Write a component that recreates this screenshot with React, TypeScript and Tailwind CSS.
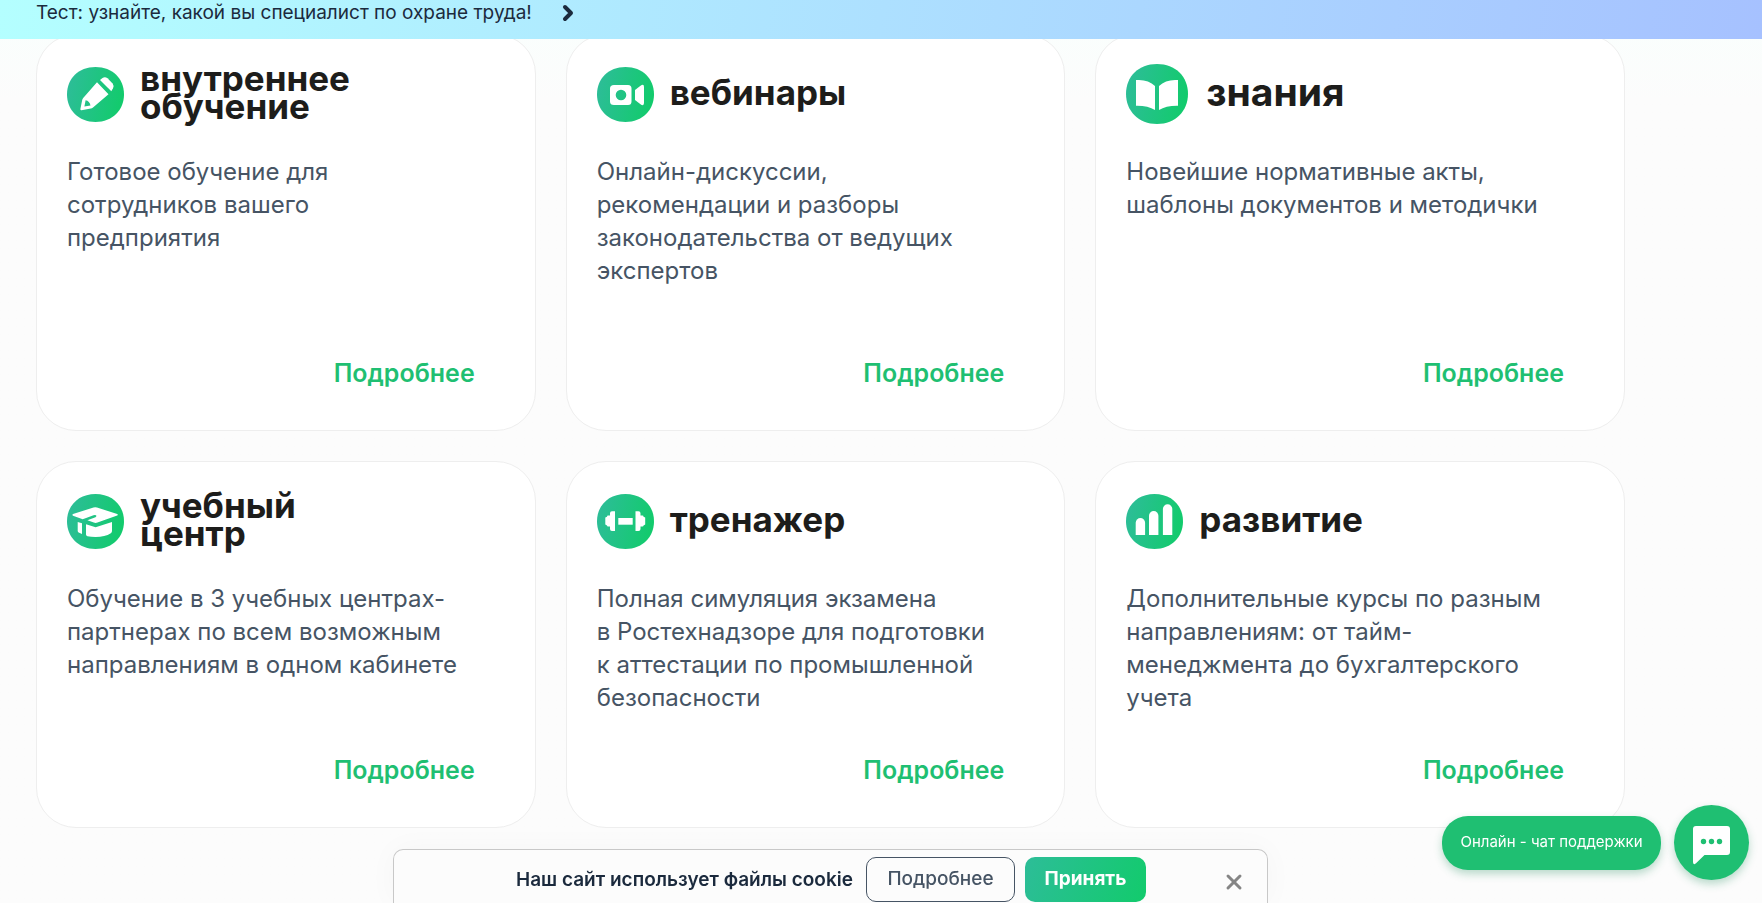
import React from 'react';
import { ChevronRight, X } from 'lucide-react';

type Badge = {
  id: string;
  width: number;
  height: number;
  art: React.ReactNode;
};

const badges: Record<string, Badge> = {
  pencil: {
    id: 'pencil',
    width: 57,
    height: 55,
    art: (
      <>
        <path
          fillRule="evenodd"
          d="M30 15.3 41.5 27.3 26 40.6Q25 41.4 23.8 41.6L14.5 43.2Q13.2 43.3 13.4 42L15.2 33Q15.4 31.8 16.2 30.9ZM18.6 33.3 17.4 39.4 23.5 38.4Q22.6 34 18.6 33.3Z"
        />
        <path d="M33 13 35.5 11Q38 9.3 40.5 11.3L45.6 16.5Q47.3 18.7 46 21.2L44.3 24.2Z" />
      </>
    ),
  },
  camera: {
    id: 'camera',
    width: 57,
    height: 55,
    art: (
      <>
        <path
          fillRule="evenodd"
          d="M17 18H31Q34.5 18 34.5 21.5V34.5Q34.5 38 31 38H17Q13 38 13 34.5V21.5Q13 18 17 18ZM24 22.7A5.3 5.3 0 1 0 24 33.3A5.3 5.3 0 1 0 24 22.7Z"
        />
        <path d="M38 23 43.5 18.7Q47 16.5 47 20V36Q47 39.5 43.5 37.3L38 33Z" />
      </>
    ),
  },
  book: {
    id: 'book',
    width: 62,
    height: 60,
    art: (
      <>
        <path d="M10 16Q22 15 29 22V46Q22 41.5 10 41.7Z" />
        <path d="M52 16Q40 15 33 22V46Q40 41.5 52 41.7Z" />
      </>
    ),
  },
  cap: {
    id: 'cap',
    width: 57,
    height: 55,
    art: (
      <>
        <path d="M6 20 26.5 13.5Q28.2 13 30 13.5L50.2 20Q51.3 20.7 50.2 21.5L30.5 28.6Q28.6 29.2 26.8 28.6L20.4 26.3 28.5 23.3Q30 22.3 29 21.3Q28 20.6 26.5 21.2L15.7 25.3 6 21.7Q4.8 20.8 6 20Z" />
        <path d="M10.7 28 15 29.3V40L11.6 38.4Q10.7 38 10.7 37Z" />
        <path d="M19 30.3 28.6 33.3 45 28V37Q45 38.5 43.8 39.2Q38 43 28.6 43Q24 43 20.4 42.2Q19 41.8 19 40.5Z" />
      </>
    ),
  },
  dumbbell: {
    id: 'dumbbell',
    width: 57,
    height: 55,
    art: (
      <>
        <path d="M15 17.3H18V37H15Q13 37 13 35V32.5H11Q10 32.5 10 31.5L8.3 30.5V23.5L10 22.8Q10 21.5 11 21.5H13V19.3Q13 17.3 15 17.3Z" />
        <path d="M41.5 17.3H38.5V37H41.5Q43.5 37 43.5 35V32.5H45.5Q46.5 32.5 46.5 31.5L48.2 30.5V23.5L46.5 22.8Q46.5 21.5 45.5 21.5H43.5V19.3Q43.5 17.3 41.5 17.3Z" />
        <path d="M21.3 24H35.7V30.7H21.3Z" />
      </>
    ),
  },
  chart: {
    id: 'chart',
    width: 57,
    height: 55,
    art: (
      <>
        <path d="M9.7 41V28.8A4.7 4.7 0 0 1 19.1 28.8V41Z" />
        <path d="M23 41V21.7A4.7 4.7 0 0 1 32.4 21.7V41Z" />
        <path d="M36.9 41V15A4.7 4.7 0 0 1 46.3 15V41Z" />
      </>
    ),
  },
};

const products = [
  {
    badge: badges.pencil,
    title: ['внутреннее', 'обучение'],
    text: ['Готовое обучение для', 'сотрудников вашего', 'предприятия'],
  },
  {
    badge: badges.camera,
    title: ['вебинары'],
    text: ['Онлайн-дискуссии,', 'рекомендации и разборы', 'законодательства от ведущих', 'экспертов'],
  },
  {
    badge: badges.book,
    title: ['знания'],
    large: true,
    text: ['Новейшие нормативные акты,', 'шаблоны документов и методички'],
  },
  {
    badge: badges.cap,
    title: ['учебный', 'центр'],
    text: ['Обучение в 3 учебных центрах-', 'партнерах по всем возможным', 'направлениям в одном кабинете'],
  },
  {
    badge: badges.dumbbell,
    title: ['тренажер'],
    text: ['Полная симуляция экзамена', 'в Ростехнадзоре для подготовки', 'к аттестации по промышленной', 'безопасности'],
  },
  {
    badge: badges.chart,
    title: ['развитие'],
    text: ['Дополнительные курсы по разным', 'направлениям: от тайм-', 'менеджмента до бухгалтерского', 'учета'],
  },
];

function BadgeIcon({ badge }: { badge: Badge }) {
  const { id, width, height, art } = badge;
  return (
    <svg width={width} height={height} viewBox={`0 0 ${width} ${height}`} className="shrink-0" aria-hidden="true">
      <defs>
        <linearGradient id={id} x1="0" y1="0.3" x2="1" y2="0.5">
          <stop offset="0" stopColor="#2dbd98" />
          <stop offset="1" stopColor="#12cb6c" />
        </linearGradient>
      </defs>
      <svg width={width} height={height} viewBox="0 0 100 100" preserveAspectRatio="none">
        <path
          d="M50 0C80 0 100 21 100 50C100 78 80 100 50 100C20 100 0 78 0 50C0 21 20 0 50 0Z"
          fill={`url(#${id})`}
        />
      </svg>
      <g fill="#fff">{art}</g>
    </svg>
  );
}

function Lines({ lines }: { lines: string[] }) {
  return (
    <>
      {lines.map((line) => (
        <span key={line} className="block">{line}</span>
      ))}
    </>
  );
}

export default function App() {
  return (
    <div className="min-h-screen bg-[#fcfcfc] bg-linear-to-b from-[#f9fffd] to-[#fcfcfc] to-[100px] font-['Inter','Noto_Sans',sans-serif]">
      <header className="sticky top-0 z-10 h-[39px] bg-linear-[100deg] from-[#b4ffff] to-[#a6c1ff]">
        <a href="#test" className="flex h-[26px] items-center gap-6 pl-9 text-[19px] text-[#1b2a3d]">
          Тест: узнайте, какой вы специалист по охране труда!
          <ChevronRight className="size-6" strokeWidth={4} />
        </a>
      </header>

      <main className="-mt-[5px] ml-9 max-w-[1589px] pb-[75px]">
        <div className="grid grid-cols-[50fr_50fr_53fr] grid-rows-[397px_367px] gap-[30px]">
          {products.map((product) => (
            <article
              key={product.badge.id}
              className="flex flex-col rounded-[40px] border border-[#eee] bg-white px-[30px] pt-[28px] pb-10"
            >
              <div className={`flex h-[62px] items-center ${product.large ? 'gap-[18px]' : 'gap-4'}`}>
                <BadgeIcon badge={product.badge} />
                <h2
                  className={`pb-1 leading-[28px] font-bold text-[#1d1d1b] ${product.large ? 'text-[39px]' : 'text-[35px]'}`}
                >
                  <Lines lines={product.title} />
                </h2>
              </div>
              <p className="mt-[30px] text-[24px] leading-[33px] whitespace-nowrap text-[#465464]">
                <Lines lines={product.text} />
              </p>
              <a
                href={`#${product.badge.id}`}
                className="mt-auto mr-[30px] self-end text-[25px] leading-[33px] font-semibold text-[#1fbf72]"
              >
                Подробнее
              </a>
            </article>
          ))}
        </div>
      </main>

      <div className="pointer-events-none fixed inset-x-0 bottom-0 z-20 ml-9 flex max-w-[1589px] justify-center">
        <div className="pointer-events-auto flex h-[54px] w-[875px] items-start rounded-t-[10px] border border-b-0 border-[#c8c8c8] bg-[#fcfcfc] pt-[7px] pr-[21px] pl-[122px] shadow-[0_0_30px_rgba(0,0,0,0.03)]">
          <p className="flex h-[46px] w-[350px] items-center text-[19px] font-semibold whitespace-nowrap text-[#1b2a3d]">
            Наш сайт использует файлы cookie
          </p>
          <button className="h-[45px] w-[149px] rounded-[10px] border border-[#465464] text-[19px] font-medium text-[#465464]">
            Подробнее
          </button>
          <button className="ml-[10px] h-[45px] w-[121px] rounded-[10px] bg-linear-[110deg] from-[#2dbd98] to-[#12cb6c] text-[19px] font-bold text-white">
            Принять
          </button>
          <button aria-label="Закрыть" className="ml-auto flex h-[50px] items-center text-[#858585]">
            <X className="size-6" strokeWidth={3} />
          </button>
        </div>
      </div>

      <div className="fixed right-[13px] bottom-[23px] z-30 flex items-center gap-[13px]">
        <button className="h-[54px] w-[219px] rounded-[26px] bg-[#1fbf72] text-[15px] text-white shadow-[0_4px_8px_rgba(31,140,90,0.3)]">
          Онлайн - чат поддержки
        </button>
        <button
          aria-label="Открыть чат"
          className="size-[75px] rounded-full bg-[#1fbf72] shadow-[0_4px_8px_rgba(31,140,90,0.3)]"
        >
          <svg viewBox="0 0 75 75" className="size-full" aria-hidden="true">
            <path
              d="M22 21H53Q56 21 56 24V47Q56 50 53 50H30.5L22 58.3Q19 60.5 19 57V24Q19 21 22 21Z"
              fill="#fff"
            />
            <g fill="#1fbf72">
              <circle cx="29.5" cy="36.5" r="2.7" />
              <circle cx="37.5" cy="36.5" r="2.7" />
              <circle cx="45.5" cy="36.5" r="2.7" />
            </g>
          </svg>
        </button>
      </div>
    </div>
  );
}
